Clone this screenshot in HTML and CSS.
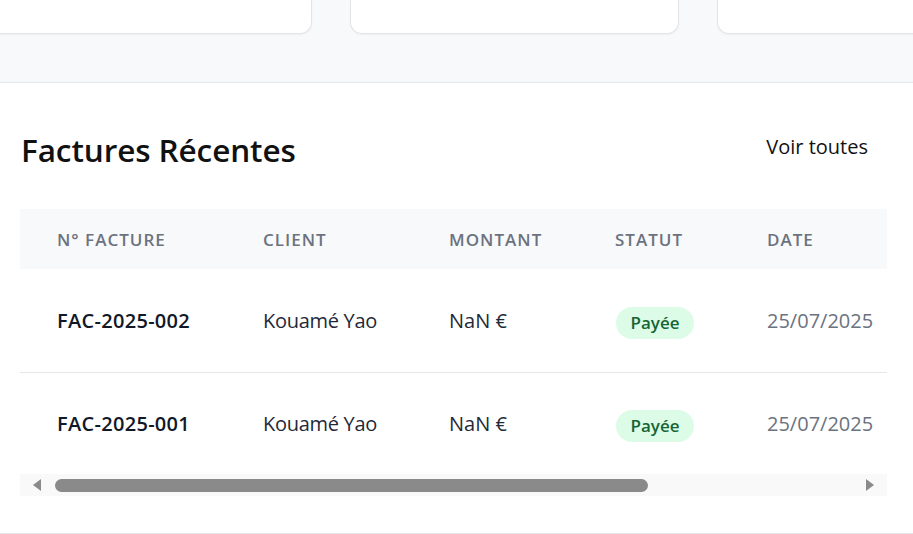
FILE: index.html
```html
<!DOCTYPE html>
<html lang="fr">
<head>
<meta charset="utf-8">
<title>Factures Récentes</title>
<link rel="stylesheet" href="styles.css">
</head>
<body>
<div class="stats">
  <div class="stat-card"></div>
  <div class="stat-card"></div>
  <div class="stat-card"></div>
</div>
<section class="recent">
  <div class="recent-head">
    <h2 class="recent-title">Factures Récentes</h2>
    <a class="see-all" href="#">Voir toutes</a>
  </div>
  <div class="table-wrap">
    <table class="invoices">
      <colgroup>
        <col class="c1"><col class="c2"><col class="c3"><col class="c4"><col class="c5"><col class="c6">
      </colgroup>
      <thead>
        <tr><th>N° Facture</th><th>Client</th><th>Montant</th><th>Statut</th><th>Date</th><th></th></tr>
      </thead>
      <tbody>
        <tr>
          <td class="num">FAC-2025-002</td><td class="client">Kouamé Yao</td><td class="amount">NaN €</td>
          <td><span class="badge">Payée</span></td><td class="date">25/07/2025</td><td></td>
        </tr>
        <tr>
          <td class="num">FAC-2025-001</td><td class="client">Kouamé Yao</td><td class="amount">NaN €</td>
          <td><span class="badge">Payée</span></td><td class="date">25/07/2025</td><td></td>
        </tr>
      </tbody>
    </table>
  </div>
  <div class="hscroll">
    <span class="arrow arrow-left"></span>
    <div class="track"><div class="thumb"></div></div>
    <span class="arrow arrow-right"></span>
  </div>
</section>
</body>
</html>
```

FILE: styles.css
```css
* { box-sizing: border-box; }
html, body { margin: 0; padding: 0; }
body {
  font-family: "Open Sans", "Noto Sans", "Liberation Sans", sans-serif;
  background: #ffffff;
  color: #111827;
  width: 913px;
  overflow: hidden;
}

.stats {
  height: 83px;
  background: #f8f9fa;
  border-bottom: 1px solid #e5e7eb;
  display: flex;
  gap: 38px;
  margin-left: -17px;
  width: 1100px;
  align-items: flex-start;
}
.stat-card {
  flex: 0 0 329px;
  height: 34px;
  background: #ffffff;
  border: 1px solid #e3e4e6;
  border-top: none;
  border-radius: 0 0 12px 12px;
  box-shadow: 0 1px 2px rgba(0,0,0,0.04);
}

.recent {
  padding: 46px 26px 37px 20px;
  border-bottom: 1px solid #e5e7eb;
}
.recent-head {
  height: 40px;
  display: flex;
  align-items: center;
  justify-content: space-between;
  margin-bottom: 40px;
}
.recent-title {
  margin: 0 0 0 1px;
  font-size: 31.5px;
  font-weight: 600;
  color: #111111;
  letter-spacing: -0.1px;
}
.see-all {
  font-size: 20px;
  font-weight: 500;
  color: #111111;
  text-decoration: none;
  padding: 4px 19px 10px;
}

.table-wrap {
  width: 867px;
  overflow: hidden;
}
.invoices {
  width: 1188px;
  table-layout: fixed;
  border-collapse: collapse;
}
.c1 { width: 206px; }
.c2 { width: 186px; }
.c3 { width: 166px; }
.c4 { width: 152px; }
.c5 { width: 200px; }
.c6 { width: 278px; }

.invoices th {
  height: 60px;
  background: #f8f9fa;
  text-align: left;
  padding: 0 0 0 37px;
  font-size: 17px;
  font-weight: 600;
  color: #6b7280;
  text-transform: uppercase;
  letter-spacing: 0.06em;
}
.invoices td {
  height: 102px;
  padding: 0 0 0 37px;
  font-size: 20px;
  white-space: nowrap;
}
.invoices tbody tr:first-child td { border-bottom: 1px solid #e5e7eb; height: 103px; }
.num { font-weight: 600; color: #111827; letter-spacing: 0.3px; }
.client, .amount { color: #1f2937; }
.client { letter-spacing: -0.3px; }
.date { color: #6b7280; }
.badge {
  display: inline-block;
  vertical-align: middle;
  margin: 6px 0 0 1px;
  width: 78px;
  height: 32px;
  line-height: 32px;
  text-align: center;
  border-radius: 16px;
  background: #dcfce7;
  color: #166534;
  font-size: 17px;
  font-weight: 600;
}

.hscroll {
  width: 867px;
  height: 22px;
  background: #f9f9f9;
  display: flex;
  align-items: center;
}
.arrow {
  width: 0;
  height: 0;
  border-top: 6px solid transparent;
  border-bottom: 6px solid transparent;
}
.arrow-left {
  margin-left: 13px;
  border-right: 8px solid #8a8a8a;
}
.arrow-right {
  margin-right: 13px;
  border-left: 8px solid #8a8a8a;
}
.track {
  flex: 1;
  height: 13px;
  padding-left: 14px;
}
.thumb {
  width: 593px;
  height: 13px;
  border-radius: 7px;
  background: #8a8a8a;
}
```
